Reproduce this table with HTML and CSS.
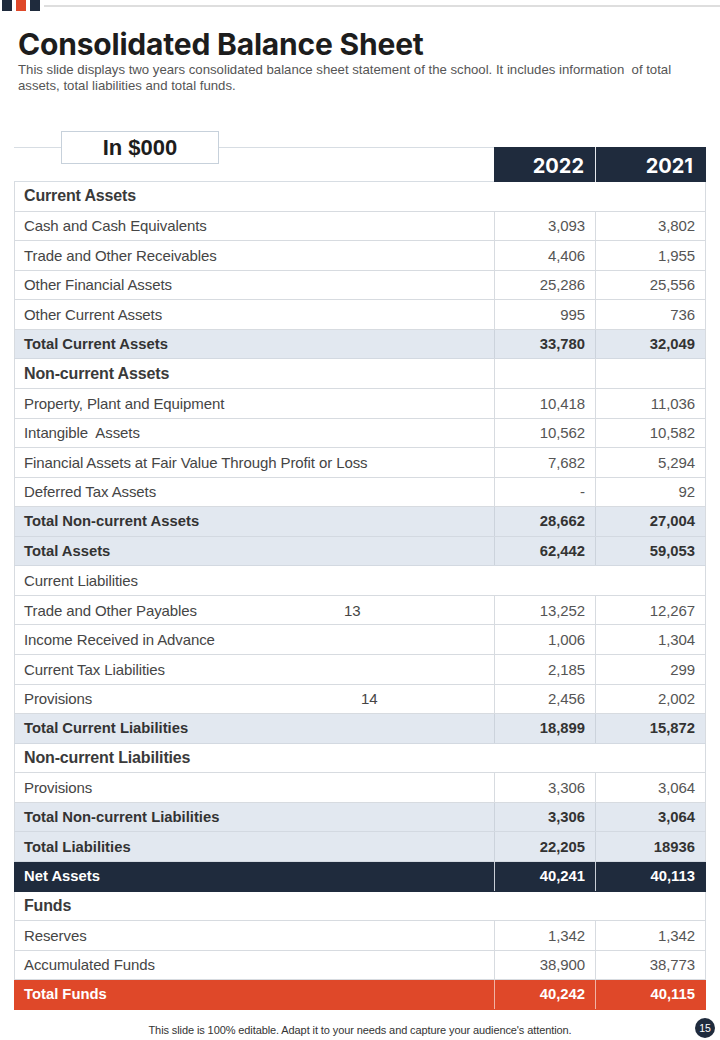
FILE: index.html
```html
<!DOCTYPE html>
<html lang="en">
<head>
<meta charset="utf-8">
<title>Consolidated Balance Sheet</title>
<link rel="stylesheet" href="styles.css">
</head>
<body>
<div class="page">
  <div class="topbar">
    <span class="sq navy"></span>
    <span class="sq red"></span>
    <span class="sq navy"></span>
    <span class="rule"></span>
  </div>

  <header class="intro">
    <h1 class="title">Consolidated Balance Sheet</h1>
    <p class="subtitle">This slide displays two years consolidated balance sheet statement of the school. It includes information&nbsp; of total assets, total liabilities and total funds.</p>
  </header>

  <section class="sheet">
    <div class="row head">
      <div class="cell unit"><span class="unit-box">In $000</span></div>
      <div class="cell year">2022</div>
      <div class="cell year second">2021</div>
    </div>

    <div class="row section span"><div class="cell label">Current Assets</div></div>
    <div class="row"><div class="cell label">Cash and Cash Equivalents</div><div class="cell num">3,093</div><div class="cell num">3,802</div></div>
    <div class="row"><div class="cell label">Trade and Other Receivables</div><div class="cell num">4,406</div><div class="cell num">1,955</div></div>
    <div class="row"><div class="cell label">Other Financial Assets</div><div class="cell num">25,286</div><div class="cell num">25,556</div></div>
    <div class="row"><div class="cell label">Other Current Assets</div><div class="cell num">995</div><div class="cell num">736</div></div>
    <div class="row total"><div class="cell label">Total Current Assets</div><div class="cell num">33,780</div><div class="cell num">32,049</div></div>

    <div class="row section"><div class="cell label">Non-current Assets</div><div class="cell num"></div><div class="cell num"></div></div>
    <div class="row"><div class="cell label">Property, Plant and Equipment</div><div class="cell num">10,418</div><div class="cell num">11,036</div></div>
    <div class="row"><div class="cell label">Intangible&nbsp; Assets</div><div class="cell num">10,562</div><div class="cell num">10,582</div></div>
    <div class="row"><div class="cell label">Financial Assets at Fair Value Through Profit or Loss</div><div class="cell num">7,682</div><div class="cell num">5,294</div></div>
    <div class="row"><div class="cell label">Deferred Tax Assets</div><div class="cell num">-</div><div class="cell num">92</div></div>
    <div class="row total"><div class="cell label">Total Non-current Assets</div><div class="cell num">28,662</div><div class="cell num">27,004</div></div>
    <div class="row total"><div class="cell label">Total Assets</div><div class="cell num">62,442</div><div class="cell num">59,053</div></div>

    <div class="row section plain span"><div class="cell label">Current Liabilities</div></div>
    <div class="row"><div class="cell label noted"><span class="text">Trade and Other Payables</span><span class="note">13</span></div><div class="cell num">13,252</div><div class="cell num">12,267</div></div>
    <div class="row"><div class="cell label">Income Received in Advance</div><div class="cell num">1,006</div><div class="cell num">1,304</div></div>
    <div class="row"><div class="cell label">Current Tax Liabilities</div><div class="cell num">2,185</div><div class="cell num">299</div></div>
    <div class="row"><div class="cell label noted"><span class="text">Provisions</span><span class="note shift">14</span></div><div class="cell num">2,456</div><div class="cell num">2,002</div></div>
    <div class="row total"><div class="cell label">Total Current Liabilities</div><div class="cell num">18,899</div><div class="cell num">15,872</div></div>

    <div class="row section span"><div class="cell label">Non-current Liabilities</div></div>
    <div class="row"><div class="cell label">Provisions</div><div class="cell num">3,306</div><div class="cell num">3,064</div></div>
    <div class="row total"><div class="cell label">Total Non-current Liabilities</div><div class="cell num">3,306</div><div class="cell num">3,064</div></div>
    <div class="row total"><div class="cell label">Total Liabilities</div><div class="cell num">22,205</div><div class="cell num">18936</div></div>
    <div class="row net"><div class="cell label">Net Assets</div><div class="cell num">40,241</div><div class="cell num">40,113</div></div>

    <div class="row section span"><div class="cell label">Funds</div></div>
    <div class="row"><div class="cell label">Reserves</div><div class="cell num">1,342</div><div class="cell num">1,342</div></div>
    <div class="row"><div class="cell label">Accumulated Funds</div><div class="cell num">38,900</div><div class="cell num">38,773</div></div>
    <div class="row grand"><div class="cell label">Total Funds</div><div class="cell num">40,242</div><div class="cell num">40,115</div></div>
  </section>

  <footer class="foot">
    <span class="spacer"></span>
    <p class="foot-text">This slide is 100% editable. Adapt it to your needs and capture your audience's attention.</p>
    <span class="page-no">15</span>
  </footer>
</div>
</body>
</html>
```

FILE: styles.css
```css
* { box-sizing: border-box; }

html, body {
  margin: 0;
  padding: 0;
  background: #ffffff;
}

body {
  font-family: "Liberation Sans", Arial, sans-serif;
  color: #444;
}

.page {
  width: 720px;
  height: 1040px;
  overflow: hidden;
}

/* top decoration */
.topbar {
  display: flex;
  align-items: center;
  height: 11px;
  padding-left: 2px;
  gap: 4px;
}
.sq {
  width: 10px;
  height: 11px;
  flex: none;
}
.sq.navy { background: #1f2b3d; }
.sq.red { background: #df4829; }
.rule {
  flex: 1;
  height: 2px;
  background: #dedede;
  margin-top: 1px;
}

/* heading */
.intro {
  padding: 0 18px;
}
.title {
  margin: 18px 0 0;
  font-family: Inter, "Liberation Sans", sans-serif;
  font-weight: 700;
  font-size: 30px;
  line-height: 30px;
  color: #1d1d1d;
  letter-spacing: -0.2px;
}
.subtitle {
  margin: 3px 0 0;
  font-size: 13.2px;
  line-height: 16px;
  color: #555;
  max-width: 662px;
}

/* table */
.sheet {
  margin: 53px 14px 0 14px;
  width: 692px;
}

.row {
  display: grid;
  grid-template-columns: 480px 101px 111px;
  height: 29.57px;
  border-bottom: 1px solid #d7dbe0;
}
.row .cell {
  display: flex;
  align-items: center;
  font-size: 15px;
  letter-spacing: -0.1px;
  color: #454545;
}
.row .label {
  padding-left: 9px;
  border-left: 1px solid #d7dbe0;
  white-space: nowrap;
}
.row .num {
  justify-content: flex-end;
  padding-right: 10px;
  border-left: 1px solid #d7dbe0;
  color: #555;
}
.row .num:last-child {
  border-right: 1px solid #d7dbe0;
}

/* header */
.row.head {
  height: 35px;
  border-bottom: none;
}
.row.head .unit {
  position: relative;
  border-top: 1px solid #d7dde3;
  border-bottom: 1px solid #d7dde3;
}
.unit-box {
  position: absolute;
  left: 47px;
  top: -17px;
  width: 158px;
  height: 33px;
  border: 1px solid #c7d1db;
  background: #fff;
  display: flex;
  align-items: center;
  justify-content: center;
  font-weight: 700;
  font-size: 22px;
  letter-spacing: 0;
  color: #1d1d1d;
}
.row.head .year {
  background: #1f2b3d;
  color: #fff;
  justify-content: flex-end;
  padding: 2px 11px 0 0;
  font-family: Inter, "Liberation Sans", sans-serif;
  font-weight: 700;
  font-size: 20px;
  letter-spacing: 0;
}
.row.head .year.second {
  border-left: 1px solid #e6e9ed;
  padding-right: 13px;
}

/* section rows */
.row.section .label {
  font-weight: 700;
  font-size: 16px;
  letter-spacing: -0.15px;
  color: #3a3a3a;
}
.row.section.plain .label {
  font-weight: 400;
  font-size: 15px;
  letter-spacing: -0.1px;
  color: #454545;
}
.row.span {
  grid-template-columns: 1fr;
}
.row.span .label {
  border-right: 1px solid #d7dbe0;
}

/* notes */
.row .cell.noted {
  display: grid;
  grid-template-columns: 320px auto;
  align-content: center;
}
.note.shift {
  padding-left: 17px;
}

/* total rows */
.row.total {
  background: #e2e8f0;
  border-bottom-color: #d3d9e1;
}
.row.total .cell {
  font-weight: 700;
  font-size: 14.8px;
  letter-spacing: 0;
  color: #333;
}
.row.total .num {
  border-left-color: #ccd3dc;
}

.row.net {
  background: #1f2b3d;
  border-bottom-color: #1f2b3d;
}
.row.net .cell {
  color: #fff;
  font-weight: 700;
  font-size: 14.8px;
  letter-spacing: 0;
  border-left-color: #1f2b3d;
}
.row.net .num {
  border-left-color: #c9ced6;
}
.row.net .num:last-child {
  border-right-color: #1f2b3d;
}

.row.grand {
  background: #df4829;
  border-bottom-color: #df4829;
}
.row.grand .cell {
  color: #fff;
  font-weight: 700;
  font-size: 14.8px;
  letter-spacing: 0;
  border-left-color: #df4829;
}
.row.grand .num {
  border-left-color: #f0b3a5;
}
.row.grand .num:last-child {
  border-right-color: #df4829;
}

/* footer */
.foot {
  display: grid;
  grid-template-columns: 1fr auto 1fr;
  align-items: center;
  padding-top: 8px;
}
.foot-text {
  margin: 0;
  font-size: 11px;
  color: #333;
  letter-spacing: -0.1px;
  padding-top: 4px;
}
.page-no {
  justify-self: end;
  margin-right: 5px;
  width: 20px;
  height: 20px;
  border-radius: 50%;
  background: #1f2b3d;
  color: #fff;
  font-size: 10.5px;
  display: flex;
  align-items: center;
  justify-content: center;
}
```
